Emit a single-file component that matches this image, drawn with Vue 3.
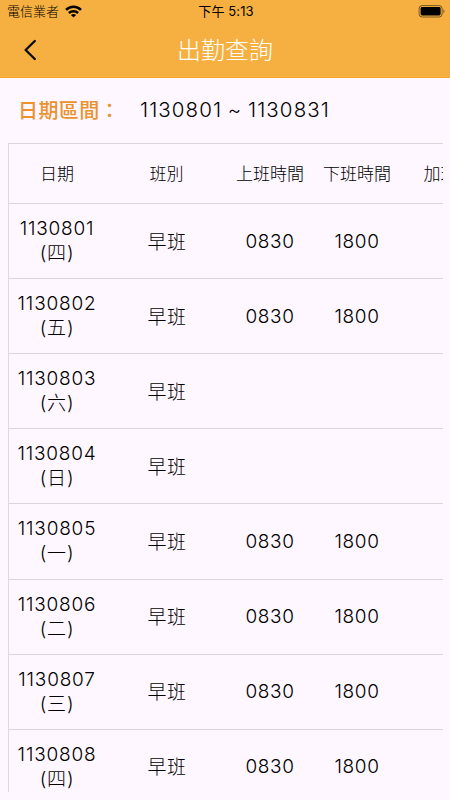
<template>
  <div class="screen">
    <header class="header">
      <div class="status">
        <div class="carrier">
          <span>電信業者</span>
          <svg class="wifi" width="17" height="13" viewBox="0 0 17 13" fill="none" stroke="#000" stroke-width="2.5">
            <path d="M1 4.9C5.2 .6 11.8 .6 16 4.9" />
            <path d="M3.9 8c2.6-2.4 6.6-2.4 9.2 0" />
            <path d="M8.5 12.6 5.9 10c1.5-1.2 3.7-1.2 5.2 0z" fill="#000" stroke="none" />
          </svg>
        </div>
        <span class="time">下午 5:13</span>
        <svg class="battery" width="27" height="13" viewBox="0 0 27 13">
          <rect x="1.1" y="0.6" width="23" height="11.4" rx="3" fill="none" stroke="#000" stroke-opacity="0.5" />
          <rect x="2.6" y="2" width="20" height="8.4" rx="1.4" fill="#000" />
          <path d="M25.4 4.3c1.5.6 1.5 3.4 0 4z" fill="#000" fill-opacity="0.5" />
        </svg>
      </div>
      <div class="nav">
        <button class="back" aria-label="返回">
          <svg width="14" height="22" viewBox="0 0 14 22" fill="none" stroke="#0c0d14" stroke-width="2.4" stroke-linecap="round" stroke-linejoin="round">
            <path d="M11.8 2 2.6 11l9.2 9" />
          </svg>
        </button>
        <h1>出勤查詢</h1>
      </div>
    </header>

    <div class="range">
      <span class="label">日期區間：</span>
      <span class="value">{{ start }} ~ {{ end }}</span>
    </div>

    <div class="table">
      <div class="row head">
        <span v-for="c in columns" :key="c">{{ c }}</span>
      </div>
      <div v-for="r in records" :key="r.date" class="row">
        <span>{{ r.date }}<br />({{ r.day }})</span>
        <span class="shift">早班</span>
        <span class="clock">{{ r.on }}</span>
        <span class="clock">{{ r.off }}</span>
        <span></span>
      </div>
    </div>
  </div>
</template>

<script setup>
import { ref } from 'vue'

const start = ref('1130801')
const end = ref('1130831')
const columns = ['日期', '班別', '上班時間', '下班時間', '加班時數']

const records = ref([
  { date: '1130801', day: '四', on: '0830', off: '1800' },
  { date: '1130802', day: '五', on: '0830', off: '1800' },
  { date: '1130803', day: '六', on: '', off: '' },
  { date: '1130804', day: '日', on: '', off: '' },
  { date: '1130805', day: '一', on: '0830', off: '1800' },
  { date: '1130806', day: '二', on: '0830', off: '1800' },
  { date: '1130807', day: '三', on: '0830', off: '1800' },
  { date: '1130808', day: '四', on: '0830', off: '1800' }
])
</script>

<style>
body {
  margin: 0;
  background: #fef7ff;
}
</style>

<style scoped>
.screen {
  box-sizing: border-box;
  height: 800px;
  padding-bottom: 8px;
  display: flex;
  flex-direction: column;
  overflow: hidden;
  background: #fef7ff;
  color: #000;
  font-family: Inter, 'Noto Sans CJK TC', sans-serif;
  font-weight: 300;
}
.header {
  box-sizing: border-box;
  flex: none;
  height: 78px;
  background: #f6b042;
  border-bottom: 1px solid #f5a623;
}
.status {
  display: grid;
  grid-template-columns: 1fr auto 1fr;
  align-items: center;
  height: 23px;
  padding: 0 5px 0 7px;
  font-size: 13px;
  line-height: 23px;
}
.carrier {
  display: flex;
  align-items: center;
  gap: 6px;
  font-weight: 300;
}
.time {
  font-weight: 400;
  letter-spacing: 0.1px;
}
.battery {
  justify-self: end;
}
.nav {
  display: grid;
  grid-template-columns: 60px 1fr 60px;
  align-items: center;
  height: 54px;
}
.back {
  display: flex;
  padding: 0 0 0 23px;
  border: none;
  background: none;
}
h1 {
  margin: 0;
  padding-top: 1px;
  color: #fff;
  font-size: 24px;
  font-weight: 300;
  line-height: 53px;
  text-align: center;
}
.range {
  flex: none;
  display: flex;
  align-items: center;
  box-sizing: border-box;
  height: 65px;
  padding: 0 0 3px 18px;
  font-size: 20px;
}
.label {
  width: 122px;
  color: #ea922f;
  font-weight: 500;
  letter-spacing: 0.4px;
}
.value {
  font-size: 20.5px;
  font-weight: 300;
  letter-spacing: 1.1px;
  word-spacing: -1.2px;
}
.table {
  flex: 1;
  min-height: 0;
  margin: 0 7px 0 8px;
  border-left: 1px solid #e0dae2;
  overflow: hidden;
}
.row {
  box-sizing: border-box;
  display: grid;
  grid-template-columns: 96px 123px 84px 90px 111px;
  align-items: center;
  width: 504px;
  height: 75.12px;
  border-top: 1px solid #dbd5dd;
  font-size: 19px;
  line-height: 25px;
  letter-spacing: 0.8px;
  text-align: center;
}
.shift {
  padding: 2px 0 0 1px;
  letter-spacing: 0.4px;
}
.clock {
  letter-spacing: 0.6px;
}
.head {
  height: 60px;
  padding-top: 2px;
  font-size: 17px;
  letter-spacing: 0;
}
</style>
